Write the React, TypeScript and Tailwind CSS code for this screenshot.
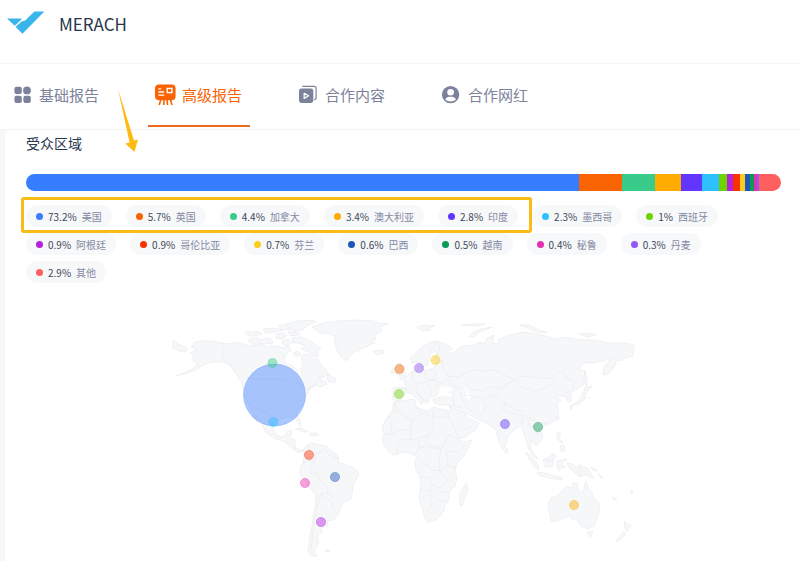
import React from 'react';

type Region = {
  name: string;
  percent: number;
  color: string;
  pin?: { x: number; y: number; r?: number };
};

const regions: Region[] = [
  { name: '美国', percent: 73.2, color: '#377dff', pin: { x: 274.5, y: 395, r: 31 } },
  { name: '英国', percent: 5.7, color: '#f96302', pin: { x: 399.5, y: 369 } },
  { name: '加拿大', percent: 4.4, color: '#38cb89', pin: { x: 272.5, y: 363 } },
  { name: '澳大利亚', percent: 3.4, color: '#ffab00', pin: { x: 574, y: 505 } },
  { name: '印度', percent: 2.8, color: '#6236ff', pin: { x: 505, y: 424 } },
  { name: '墨西哥', percent: 2.3, color: '#2fc1ff', pin: { x: 273.5, y: 422 } },
  { name: '西班牙', percent: 1, color: '#6dd400', pin: { x: 399, y: 394 } },
  { name: '阿根廷', percent: 0.9, color: '#b620e0', pin: { x: 321, y: 522 } },
  { name: '哥伦比亚', percent: 0.9, color: '#fa3200', pin: { x: 309, y: 455 } },
  { name: '芬兰', percent: 0.7, color: '#fbcd1c', pin: { x: 435.5, y: 360 } },
  { name: '巴西', percent: 0.6, color: '#1f57b8', pin: { x: 335, y: 477 } },
  { name: '越南', percent: 0.5, color: '#0b9b56', pin: { x: 538, y: 427 } },
  { name: '秘鲁', percent: 0.4, color: '#e62eb4', pin: { x: 305, y: 483 } },
  { name: '丹麦', percent: 0.3, color: '#9059f7', pin: { x: 419, y: 368 } },
  { name: '其他', percent: 2.9, color: '#ff5f5f' },
];

const land = [
  // North and Central America
  'M191 347L195 344L193 343L200 341L210 341L223 343L229 344L236 342L246 345L256 346L262 344L268 347L277 346L283 348L289 346L291 350L286 354L284 359L286 364L292 366L297 370L299 377L302 374L301 368L303 363L301 358L304 354L310 355L314 360L317 358L321 364L326 370L329 374L324 377L318 377L322 379L320 382L325 381L327 384L320 387L316 385L310 389L308 393L305 397L305 402L300 408L296 413L301 422L300 426L296 419L290 417L283 418L275 421L273 427L275 434L281 437L285 436L287 431L292 431L290 438L295 440L295 447L300 450L304 449L303 452L297 452L290 446L284 441L274 438L266 433L262 424L256 415L258 423L255 419L250 407L244 397L243 385L239 378L234 371L230 365L222 362L213 362L206 364L199 368L188 373L176 376L190 370L198 365L193 361L194 356L190 353L197 350Z',
  'M327 375L331 376L336 379L335 383L328 381Z',
  'M173 340L178 344L187 348L186 352L179 351L173 348Z',
  // Arctic islands
  'M245 332L250 331L252 333L258 331L262 334L254 336L249 336Z',
  'M249 339L257 337L260 340L268 338L273 341L272 344L263 343L255 345L249 342Z',
  'M263 329L272 328L277 329L285 327L284 330L275 332L265 333Z',
  'M276 334L283 333L287 336L282 339L276 338Z',
  'M279 325L289 325L294 327L290 330L281 329Z',
  'M286 324L298 321L313 320L316 322L308 325L303 330L294 331L289 328Z',
  'M288 332L298 332L300 335L291 336Z',
  'M282 341L288 339L292 342L288 346L283 345Z',
  'M292 338L300 337L308 340L316 345L321 349L317 351L319 355L314 357L309 352L301 349L305 346L299 343L293 343Z',
  'M293 353L298 351L301 355L296 357Z',
  'M312 327L323 323L338 321L358 320L373 321L379 323L388 324L380 327L382 331L376 334L376 339L370 342L375 343L365 347L355 352L350 356L347 361L342 358L337 351L335 343L335 337L330 334L319 333Z',
  'M373 351L378 350L384 351L384 353L379 355L374 353Z',
  // Caribbean
  'M295 429L301 428L309 432L304 432Z',
  'M310 433L317 433L319 435L311 436Z',
  // South America
  'M304 449L308 444L313 443L320 445L326 446L330 450L336 454L339 458L338 462L344 464L352 467L358 471L359 475L354 482L353 489L351 499L343 502L340 510L337 516L333 520L327 521L328 526L321 528L322 532L318 534L318 540L319 542L316 547L314 552L317 556L312 556L308 551L309 544L310 535L312 526L313 516L315 506L316 494L310 489L305 480L300 474L300 467L303 463L304 457Z',
  'M325 551L330 550L329 552Z',
  // Europe and Asia
  'M396 387L406 388L405 381L399 378L407 376L413 371L418 370L417 366L421 366L424 371L434 368L436 363L443 361L433 361L437 354L434 350L430 356L427 365L422 367L419 362L412 363L410 358L416 353L422 347L431 342L438 341L446 344L453 349L447 351L452 354L457 350L462 346L473 345L480 342L484 344L487 338L494 335L492 343L498 344L499 339L507 336L515 334L523 332L532 333L546 336L555 339L566 337L580 340L594 340L609 343L624 343L634 345L633 356L627 357L623 360L617 361L614 367L608 374L603 375L604 367L609 361L612 358L602 361L594 363L584 363L579 369L585 371L586 378L583 385L577 389L571 393L571 401L568 402L565 396L559 396L556 398L561 400L557 404L559 411L557 419L549 424L543 426L539 429L543 435L541 441L536 446L532 440L530 446L535 455L538 459L534 457L529 450L526 441L524 433L520 427L515 429L508 436L506 445L503 450L498 439L496 430L490 425L482 421L474 418L467 413L466 416L472 420L479 423L475 430L464 437L457 440L454 434L448 421L446 416L450 410L449 405L440 405L434 403L433 399L441 397L453 397L453 394L447 391L448 386L440 389L436 396L429 398L428 403L424 402L420 395L415 391L421 397L425 400L421 405L419 400L412 394L407 393L403 396L400 401L393 400L393 388Z',
  'M396 374L398 370L396 365L400 362L403 370L406 374L401 376Z',
  'M392 369L396 368L395 373L391 373Z',
  'M417 327L425 325L435 326L429 328L431 330L422 331Z',
  'M469 337L473 332L481 329L492 327L486 330L478 333L474 337Z',
  'M461 325L471 324L485 324L476 326Z',
  'M520 325L529 325L539 330L547 332L539 333L529 329Z',
  'M579 334L588 333L596 335L588 337Z',
  'M585 371L587 378L587 387L584 382Z',
  'M584 388L592 386L588 391L584 391Z',
  'M570 406L576 403L581 398L583 392L586 392L585 399L579 404L573 405L571 410Z',
  'M506 448L508 450L507 453L505 452Z',
  // Africa
  'M394 402L402 401L414 399L416 401L415 406L421 409L428 411L433 407L441 409L447 410L449 416L453 425L456 433L460 441L464 442L472 440L468 449L463 457L457 463L455 470L457 479L455 486L449 492L449 499L445 505L444 511L438 518L434 521L427 522L424 515L421 505L419 497L421 487L420 477L416 470L415 462L417 457L412 454L404 452L394 455L389 452L384 445L382 438L384 433L382 427L387 418L392 411Z',
  'M466 483L468 490L465 497L462 506L459 504L460 494Z',
  // South-east Asia
  'M525 452L530 455L537 463L539 470L534 466L529 459Z',
  'M537 472L546 473L554 476L563 478L561 480L549 478L538 475Z',
  'M543 460L549 457L553 453L556 457L553 461L552 467L545 467Z',
  'M557 461L563 460L567 459L562 463L565 468L561 467L559 471L557 467Z',
  'M557 432L561 433L559 438L563 443L560 442L557 438Z',
  'M560 446L564 445L565 451L561 451Z',
  'M567 463L573 464L576 468L580 465L588 469L591 474L594 478L585 475L580 477L575 473L570 469Z',
  'M557 416L559 417L558 421L556 419Z',
  // Oceania
  'M549 502L551 498L557 496L562 491L567 486L571 488L573 483L578 484L577 489L583 493L586 481L588 488L592 492L594 498L599 504L600 509L597 518L594 526L588 529L581 526L578 522L577 518L573 520L570 516L563 518L557 521L551 522L550 514L548 508Z',
  'M588 532L593 532L591 537L588 535Z',
  'M624 521L628 525L631 526L627 532L625 528Z',
  'M624 532L626 534L620 540L616 542L618 538Z',
  'M591 467L597 470L594 471ZM598 473L603 478L599 476ZM612 497L617 499L614 500ZM630 492L633 490L632 494Z',
];

const borders = [
  'M223 343V360L230 364L235 371',
  'M247 379H280L289 380L300 384L308 389L317 383',
  'M251 407L259 409L267 413L274 417',
  'M308 445L311 451L316 454L315 462L307 460L301 466',
  'M316 454L325 449L329 455L338 459',
  'M315 462L311 467L310 473L317 473L320 482L327 486L328 493L321 494L318 502L316 512L313 529L311 550',
  'M321 494L328 500L332 502L332 508L339 514M328 493L334 498',
  'M394 402L397 411L390 416L384 421',
  'M397 411L412 421L422 413L416 407',
  'M422 413L433 417L434 408M434 417H451M433 417V430L429 435L425 444L432 446L443 447L449 435L458 439',
  'M390 416L392 435L384 434M392 435L400 430L411 430L412 421M411 430L410 440L403 439L398 443L397 453M410 440L420 438L428 435M420 438L419 448L414 456',
  'M419 448L427 447L441 449L439 460L440 471L431 470L427 464L417 464M440 471L448 466L457 468M443 447L447 451L457 452L465 445M448 466L447 453',
  'M420 477L429 478L432 485L430 491L420 491M430 491L431 507L425 511M431 507L438 500L446 502M432 485L441 488L448 480L443 476L440 471M438 493L447 492',
  'M400 388L408 390M413 371L412 380L418 384L417 391M418 384L425 382L434 380L444 384M425 371L426 379L434 380L436 371M428 384L432 391L430 396M434 384L440 387M429 352L436 343L440 346L438 355M443 361L442 368L449 377',
  'M447 379L452 385L461 388M447 376L460 377L462 374L475 370L488 371L495 370L502 374L515 380L520 376L531 377L542 378L553 378L557 372L563 371L567 379L574 381L573 388L565 394',
  'M466 385L472 389L484 391L490 387L501 388L515 379L520 386L534 391L545 388L553 382',
  'M469 386L464 395L472 396L484 399L485 409L480 417M484 399L494 396L505 403L515 410L524 412M485 409L494 401M494 396L501 388',
  'M453 397L454 405L449 407L462 412L466 413M454 405L462 408M460 392L463 401L472 412M462 431L472 427',
  'M505 403L503 409L514 414L523 415L522 425M523 415L530 418L528 427L535 426L538 436M530 418L537 422L548 424',
  'M545 461L553 460M580 465V477M591 398L587 398',
];

const BrandLogo: React.FC = () => (
  <svg className="h-6 w-10" viewBox="0 0 40 24" fill="#3ab5ec" aria-hidden="true">
    <path d="M0 8.5H14.8L13.4 10.6L7.8 15.8Z" />
    <path d="M15.4 23.8L8.6 16.8L14.6 11.6L18.2 10.6L27.4 1.5H37.4Z" />
  </svg>
);

const GridIcon = () => (
  <svg className="size-[22px]" viewBox="0 0 22 22" fill="currentColor" aria-hidden="true">
    <rect x="2.4" y="2.8" width="7.4" height="7.2" rx="2" />
    <circle cx="15" cy="6.4" r="3.9" />
    <rect x="2.4" y="11.7" width="7.4" height="7.2" rx="2" />
    <rect x="11.4" y="11.7" width="7.4" height="7.2" rx="2" />
  </svg>
);

const BoardIcon = () => (
  <svg className="size-[22px]" viewBox="0 0 22 22" aria-hidden="true">
    <path d="M6 15L4.2 21M9.2 15L8.7 21M12 15L12.5 21M15.2 15L17 21" stroke="currentColor" strokeWidth="1.6" />
    <rect x="0" y="0.4" width="20.6" height="15.8" rx="4" fill="currentColor" />
    <path d="M3.4 4.8H6.2M3.4 8H9.2M3.4 11.2H9.2" stroke="#fff" strokeWidth="1.3" />
    <rect x="12.3" y="4.4" width="4.6" height="4.2" fill="none" stroke="#fff" strokeWidth="1.4" />
  </svg>
);

const ContentIcon = () => (
  <svg className="size-[22px]" viewBox="0 0 22 22" aria-hidden="true">
    <path d="M5 3V2.4H16.2Q18.1 2.4 18.1 4.3V14.2Q18.1 15.6 16.2 15.6" fill="none" stroke="currentColor" strokeWidth="1.2" />
    <rect x="1" y="4.6" width="14.3" height="14.3" rx="2.4" fill="currentColor" />
    <path d="M6.2 9.2L10.6 11.8L6.2 14.4Z" fill="none" stroke="#fff" strokeWidth="1.3" strokeLinejoin="round" />
  </svg>
);

const UserIcon = () => (
  <svg className="size-[22px]" viewBox="0 0 22 22" aria-hidden="true">
    <circle cx="9.6" cy="10.6" r="8.7" fill="currentColor" />
    <circle cx="9.6" cy="8.3" r="3.3" fill="#fff" />
    <path d="M4.2 15.4Q5.2 12.7 8 12.7H11.2Q14 12.7 15 15.4Q12.8 17.4 9.6 17.4Q6.4 17.4 4.2 15.4Z" fill="#fff" />
  </svg>
);

const tabs = [
  { label: '基础报告', icon: <GridIcon />, active: false },
  { label: '高级报告', icon: <BoardIcon />, active: true },
  { label: '合作内容', icon: <ContentIcon />, active: false },
  { label: '合作网红', icon: <UserIcon />, active: false },
];

const WorldMap: React.FC = () => (
  <svg className="mx-auto mt-[33px] block w-full max-w-[464px]" viewBox="172 316 464 245" role="img" aria-label="受众区域">
    <g fill="#f6f7f9" stroke="#e8eaed" strokeWidth="0.6" strokeLinejoin="round">
      {land.map((d) => (
        <path key={d} d={d} />
      ))}
    </g>
    {/* Inland seas */}
    <path d="M466 386L470 388L468 392L471 398L467 399L464 392Z M440 387L448 386L454 391L446 392L439 391Z" fill="#fff" />
    <g fill="none" stroke="#e9ebee" strokeWidth="0.7" strokeLinejoin="round">
      {borders.map((d) => (
        <path key={d} d={d} />
      ))}
    </g>
    {regions.map(
      ({ name, color, pin }) =>
        pin && (
          <circle
            key={name}
            cx={pin.x}
            cy={pin.y}
            r={pin.r ?? 4.6}
            fill={color}
            fillOpacity={pin.r ? 0.42 : 0.45}
            stroke={color}
            strokeOpacity={pin.r ? 0.25 : 0.35}
          />
        )
    )}
  </svg>
);

const App: React.FC = () => {
  return (
    <div className="relative min-h-screen overflow-hidden bg-white font-['Noto_Sans_CJK_SC','Noto_Sans',sans-serif]">
      <header className="flex h-16 items-start gap-3 border-b border-[#f3f5f8] px-[7px] pt-[10px]">
        <BrandLogo />
        <h1 className="text-[17px] leading-7 text-[#27364b]">MERACH</h1>
      </header>

      <nav className="flex h-[66px] gap-[41px] border-b border-[#f3f4f6] pl-[5px]">
        {tabs.map((tab) => (
          <a
            key={tab.label}
            href="#"
            aria-current={tab.active ? 'page' : undefined}
            className={
              tab.active
                ? 'flex h-[63px] items-center gap-[5px] border-b-2 border-[#ec6a1e] pt-px pr-2 pl-[7px] text-[15px] text-[#f96302]'
                : 'flex h-[63px] items-center gap-[5px] border-b-2 border-transparent pt-px pr-2 pl-[7px] text-[15px] text-[#7c829b]'
            }
          >
            {tab.icon}
            <span className="whitespace-nowrap">{tab.label}</span>
          </a>
        ))}
      </nav>

      <main className="bg-[#f6f7f9] pl-[5px]">
        <section className="rounded-tl bg-white pt-[3px] pr-[19px] pl-[21px]">
          <h2 className="text-sm leading-5 text-[#27364b]">受众区域</h2>

          <div className="mt-[21px] flex h-[17px] overflow-hidden rounded-full">
            {regions.map((region) => (
              <div
                key={region.name}
                style={{ width: `${region.percent}%`, backgroundColor: region.color }}
              />
            ))}
          </div>

          <ul className="relative mt-[14px] flex flex-wrap gap-x-[14px] gap-y-[6px]">
            {regions.map((region) => (
              <li
                key={region.name}
                className="flex h-[22px] items-center gap-[5px] rounded-full bg-[#f7f8fa] px-[10px] text-[10px] whitespace-nowrap"
              >
                <span className="size-[7px] rounded-full" style={{ backgroundColor: region.color }} />
                <span className="text-[#3c4858]">{region.percent}%</span>
                <span className="text-[#8489a3]">{region.name}</span>
              </li>
            ))}
            {/* Highlight around the top five regions */}
            <li
              aria-hidden="true"
              className="pointer-events-none absolute -top-2 -left-[5px] h-9 w-[511px] rounded-[3px] border-3 border-[#f9bc16]"
            />
          </ul>

          <WorldMap />
        </section>
      </main>

      <svg className="pointer-events-none absolute top-[88px] left-[116px] h-[66px] w-6" viewBox="116 88 24 66" aria-hidden="true">
        <path d="M118 89L134 140.5L138 139.5L134.4 152L125.3 143.5L129.6 142.5Z" fill="#fdbb12" />
      </svg>
    </div>
  );
};

export default App;
